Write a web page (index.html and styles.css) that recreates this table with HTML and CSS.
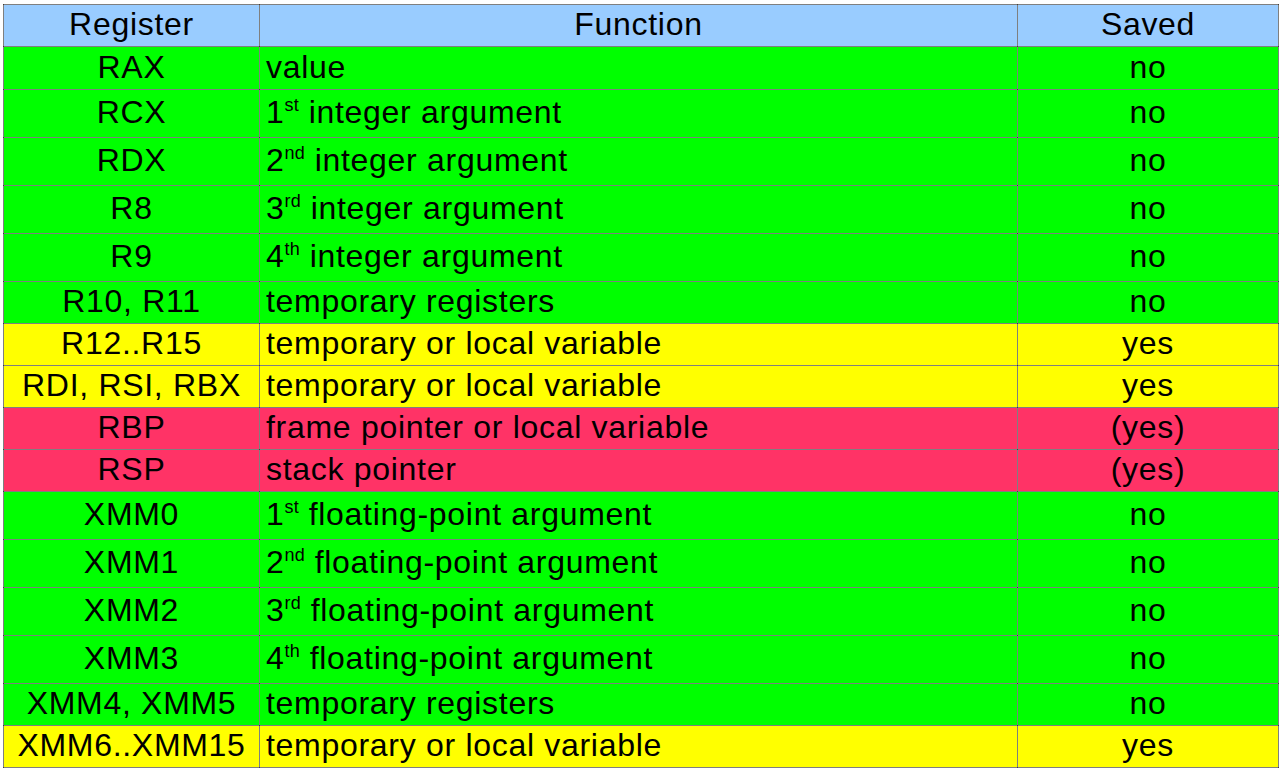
FILE: index.html
```html
<!DOCTYPE html>
<html>
<head>
<meta charset="utf-8">
<link rel="stylesheet" href="styles.css">
</head>
<body>
<table class="regs">
  <colgroup>
    <col class="c-reg">
    <col class="c-fn">
    <col class="c-saved">
  </colgroup>
  <thead>
    <tr class="head"><th>Register</th><th>Function</th><th>Saved</th></tr>
  </thead>
  <tbody>
    <tr class="green first"><td class="reg">RAX</td><td class="fn">value</td><td class="sv">no</td></tr>
    <tr class="green tall"><td class="reg">RCX</td><td class="fn">1<sup>st</sup> integer argument</td><td class="sv">no</td></tr>
    <tr class="green tall"><td class="reg">RDX</td><td class="fn">2<sup>nd</sup> integer argument</td><td class="sv">no</td></tr>
    <tr class="green tall"><td class="reg">R8</td><td class="fn">3<sup>rd</sup> integer argument</td><td class="sv">no</td></tr>
    <tr class="green tall"><td class="reg">R9</td><td class="fn">4<sup>th</sup> integer argument</td><td class="sv">no</td></tr>
    <tr class="green"><td class="reg">R10, R11</td><td class="fn">temporary registers</td><td class="sv">no</td></tr>
    <tr class="yellow"><td class="reg">R12..R15</td><td class="fn">temporary or local variable</td><td class="sv">yes</td></tr>
    <tr class="yellow"><td class="reg">RDI, RSI, RBX</td><td class="fn">temporary or local variable</td><td class="sv">yes</td></tr>
    <tr class="red"><td class="reg">RBP</td><td class="fn">frame pointer or local variable</td><td class="sv">(yes)</td></tr>
    <tr class="red"><td class="reg">RSP</td><td class="fn">stack pointer</td><td class="sv">(yes)</td></tr>
    <tr class="green tall"><td class="reg">XMM0</td><td class="fn">1<sup>st</sup> floating-point argument</td><td class="sv">no</td></tr>
    <tr class="green tall"><td class="reg">XMM1</td><td class="fn">2<sup>nd</sup> floating-point argument</td><td class="sv">no</td></tr>
    <tr class="green tall"><td class="reg">XMM2</td><td class="fn">3<sup>rd</sup> floating-point argument</td><td class="sv">no</td></tr>
    <tr class="green tall"><td class="reg">XMM3</td><td class="fn">4<sup>th</sup> floating-point argument</td><td class="sv">no</td></tr>
    <tr class="green"><td class="reg">XMM4, XMM5</td><td class="fn">temporary registers</td><td class="sv">no</td></tr>
    <tr class="yellow"><td class="reg">XMM6..XMM15</td><td class="fn">temporary or local variable</td><td class="sv">yes</td></tr>
  </tbody>
</table>
</body>
</html>
```
FILE: styles.css
```css
html, body {
  margin: 0;
  padding: 0;
  background: #ffffff;
}

body {
  padding: 4px 0 0 3px;
}

.regs {
  border-collapse: collapse;
  table-layout: fixed;
  width: 1275px;
  font-family: "Liberation Sans", Arial, sans-serif;
  font-size: 32px;
  letter-spacing: 0.7px;
  color: #000000;
}

.c-reg { width: 256px; }
.c-fn { width: 758px; }
.c-saved { width: 261px; }

.regs th,
.regs td {
  border: 1px solid rgba(0, 0, 0, 0.5);
  padding: 0 0 3px 0;
  height: 38px;
  line-height: 36px;
  vertical-align: middle;
  white-space: nowrap;
  overflow: hidden;
  font-weight: normal;
}

.regs tr.first td {
  height: 39px;
}

.regs tr.tall td {
  height: 44px;
}

.regs th { text-align: center; }
.regs .reg { text-align: center; }
.regs .sv { text-align: center; }
.regs .fn { text-align: left; padding-left: 6px; }

.regs sup {
  font-size: 18px;
  line-height: 0;
  vertical-align: 12px;
  letter-spacing: 0.3px;
}

.head { background: #99ccff; }
.green { background: #00ff00; }
.yellow { background: #ffff00; }
.red { background: #ff3366; }
```
